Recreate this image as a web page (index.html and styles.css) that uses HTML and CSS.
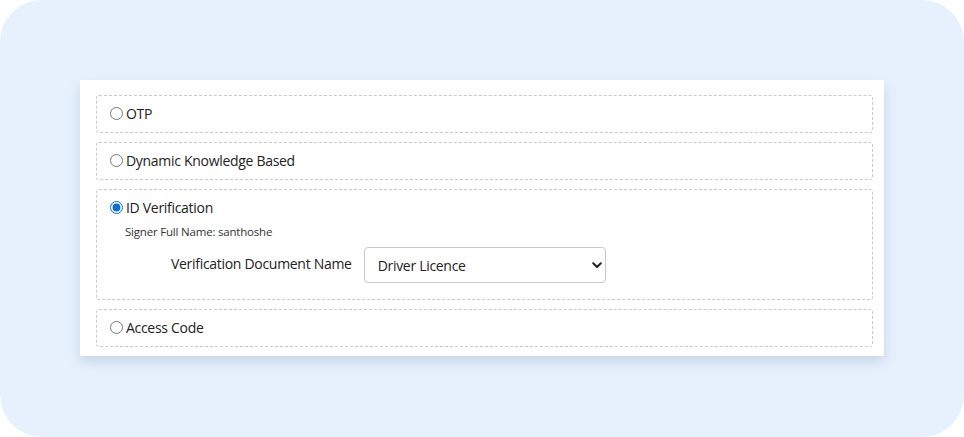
FILE: index.html
```html
<!DOCTYPE html>
<html>

<head>
    <title>Signer Authentication</title>
    <link rel="stylesheet" href="styles.css">
</head>

<body>
    <div class="frame">
        <div class="card">
            <div class="option">
                <label class="choice"><input type="radio" name="auth"> OTP</label>
            </div>
            <div class="option">
                <label class="choice"><input type="radio" name="auth"> Dynamic Knowledge Based</label>
            </div>
            <div class="option option-open">
                <label class="choice"><input type="radio" name="auth" checked> ID Verification</label>
                <div class="signer">Signer Full Name: santhoshe</div>
                <div class="doc-row">
                    <span class="doc-label">Verification Document Name</span>
                    <div class="select-wrap">
                        <select class="doc-select">
                            <option>Driver Licence</option>
                            <option>Passport</option>
                            <option>National ID</option>
                        </select>
                        <svg class="chevron" width="10" height="7" viewBox="0 0 10 7">
                            <path d="M1.2 1.3 L5 5 L8.8 1.3" fill="none" stroke="#222" stroke-width="2" stroke-linecap="round" stroke-linejoin="round"/>
                        </svg>
                    </div>
                </div>
            </div>
            <div class="option">
                <label class="choice"><input type="radio" name="auth"> Access Code</label>
            </div>
        </div>
    </div>
</body>

</html>
```

FILE: styles.css
```css
body {
    margin: 0;
    background: white;
    font-family: "Open Sans", "Noto Sans", sans-serif;
    color: #222;
}

.frame {
    width: 964px;
    height: 437px;
    box-sizing: border-box;
    padding: 80px 80px 0 80px;
    background: #e7f1fe;
    border-radius: 42px;
}

.card {
    width: 804px;
    box-sizing: border-box;
    padding: 15px 11px 9px 16px;
    background: white;
    box-shadow: 0 6px 12px rgba(60, 90, 130, 0.18);
    display: flex;
    flex-direction: column;
    gap: 9px;
}

.option {
    border: 1px dashed #c9c9c9;
    border-radius: 3px;
    padding: 7px 13px 9px 13px;
}

.option-open {
    padding-bottom: 16px;
}

.choice {
    display: flex;
    align-items: center;
    height: 20px;
    font-size: 14px;
    letter-spacing: -0.3px;
}

.choice input {
    width: 13px;
    height: 13px;
    margin: 0 3px 0 0;
    accent-color: #0a6fd6;
}

.signer {
    margin-top: 7px;
    padding-left: 15px;
    font-size: 11.5px;
    line-height: 16px;
    letter-spacing: -0.2px;
    color: #333;
}

.doc-row {
    display: flex;
    align-items: center;
    gap: 12px;
    margin-top: 7px;
    padding-left: 61px;
}

.doc-label {
    font-size: 14px;
    letter-spacing: -0.3px;
    margin-top: -4px;
}

.select-wrap {
    position: relative;
}

.doc-select {
    appearance: none;
    width: 242px;
    height: 36px;
    padding: 0 13px;
    border: 1px solid #c8c8c8;
    border-radius: 4px;
    background: white;
    font-family: inherit;
    font-size: 14px;
    letter-spacing: -0.3px;
    color: #222;
}

.chevron {
    position: absolute;
    right: 4px;
    top: 15px;
    pointer-events: none;
}
```
